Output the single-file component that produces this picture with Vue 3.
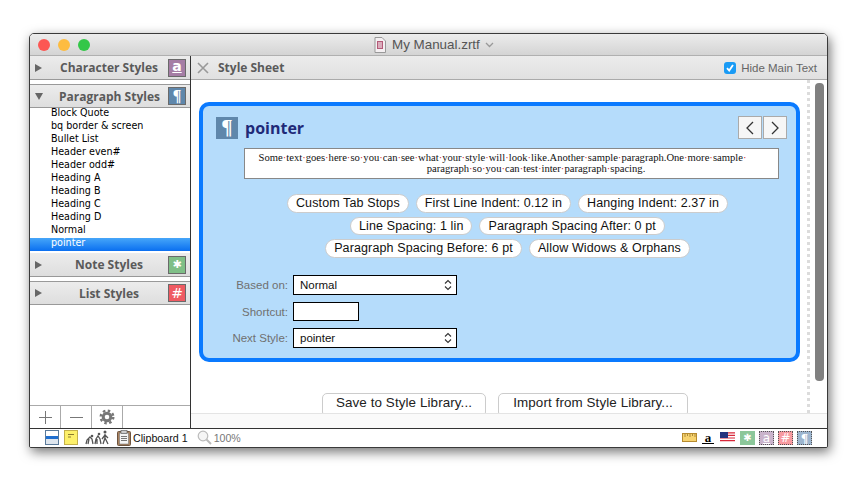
<script setup>
const paragraphStyles = ['Block Quote', 'bq border & screen', 'Bullet List', 'Header even#', 'Header odd#', 'Heading A', 'Heading B', 'Heading C', 'Heading D', 'Normal', 'pointer']
const chipRows = [
  ['Custom Tab Stops', 'First Line Indent: 0.12 in', 'Hanging Indent: 2.37 in'],
  ['Line Spacing: 1 lin', 'Paragraph Spacing After: 0 pt'],
  ['Paragraph Spacing Before: 6 pt', 'Allow Widows & Orphans']
]
const previewLines = [
  'Some text goes here so you can see what your style will look like.Another sample paragraph.One more sample '.split(' '),
  'paragraph so you can test inter paragraph spacing.'.split(' ')
]
</script>

<template>
  <div class="page">
    <div class="window">
      <header class="titlebar">
        <div class="lights"><i class="red"></i><i class="yellow"></i><i class="green"></i></div>
        <div class="title">
          <svg width="14" height="16" viewBox="0 0 14 16"><path d="M2 .5h7l3.500 3.500v11.500h-10.500z" fill="#f4f0f2" stroke="#999"/><rect x="4" y="4" width="6" height="8" fill="#b45a78"/><path d="M5 6h4M5 8h4M5 10h4" stroke="#fff"/></svg>
          <span>My Manual.zrtf</span>
          <svg width="9" height="6" viewBox="0 0 9 6"><path d="M1 1l3.500 3.500L8 1" fill="none" stroke="#999" stroke-width="1.300"/></svg>
        </div>
      </header>

      <div class="body">
        <aside class="sidebar">
          <div class="group-head">
            <i class="tri"></i><span class="group-label">Character Styles</span>
            <span class="style-icon purple">a</span>
          </div>
          <div class="group-head spaced">
            <i class="tri open"></i><span class="group-label">Paragraph Styles</span>
            <span class="style-icon blue">¶</span>
          </div>
          <ul class="style-list">
            <li v-for="name in paragraphStyles" :key="name" :class="{ selected: name === 'pointer' }">{{ name }}</li>
          </ul>
          <div class="group-head">
            <i class="tri"></i><span class="group-label">Note Styles</span>
            <span class="style-icon green">✱</span>
          </div>
          <div class="group-head spaced">
            <i class="tri"></i><span class="group-label">List Styles</span>
            <span class="style-icon redbg">#</span>
          </div>
          <div class="side-fill"></div>
          <div class="side-tools">
            <button><svg width="15" height="15" viewBox="0 0 15 15"><path d="M7.500 1v13M1 7.500h13" stroke="#777"/></svg></button>
            <button><svg width="15" height="15" viewBox="0 0 15 15"><path d="M1 7.500h13" stroke="#777"/></svg></button>
            <button>
              <svg width="16" height="16" viewBox="0 0 16 16"><circle cx="8" cy="8" r="3.800" fill="none" stroke="#777" stroke-width="3"/><circle cx="8" cy="8" r="6.300" fill="none" stroke="#777" stroke-width="2.400" stroke-dasharray="2.500 2.450"/></svg>
            </button>
            <span class="tool-end"></span>
          </div>
        </aside>

        <main class="main">
          <div class="sheet-head">
            <svg class="close" width="12" height="12" viewBox="0 0 12 12"><path d="M1 1l10 10M11 1L1 11" stroke="#999" stroke-width="1.600"/></svg>
            <span class="sheet-title">Style Sheet</span>
            <label class="hide-main">
              <span class="check"><svg width="10" height="10" viewBox="0 0 10 10"><path d="M2 5.200l2.200 2.400L8 2" fill="none" stroke="#fff" stroke-width="1.800"/></svg></span>
              Hide Main Text
            </label>
          </div>

          <div class="sheet-wrap">
            <div class="sheet-content">
              <section class="panel">
                <div class="panel-head">
                  <span class="panel-icon">¶</span>
                  <span class="panel-name">pointer</span>
                  <div class="nav">
                    <button><svg width="10" height="14" viewBox="0 0 10 14"><path d="M8 1L2 7l6 6" fill="none" stroke="#333" stroke-width="1.300"/></svg></button>
                    <button><svg width="10" height="14" viewBox="0 0 10 14"><path d="M2 1l6 6-6 6" fill="none" stroke="#333" stroke-width="1.300"/></svg></button>
                  </div>
                </div>

                <div class="preview">
                  <div v-for="(words, i) in previewLines" :key="i" :class="i === 0 ? 'first-line' : 'hang-line'">
                    <template v-for="(w, j) in words" :key="j">{{ w }}<span v-if="j < words.length - 1" class="dot">·</span></template>
                  </div>
                </div>

                <div class="chips">
                  <div v-for="(row, i) in chipRows" :key="i" class="chip-row">
                    <span v-for="chip in row" :key="chip" class="chip">{{ chip }}</span>
                  </div>
                </div>

                <div class="form">
                  <label>Based on:</label>
                  <div class="select">Normal<svg width="8" height="12" viewBox="0 0 8 12"><path d="M1 4.500l3-3 3 3M1 7.500l3 3 3-3" fill="none" stroke="#333" stroke-width="1.100"/></svg></div>
                  <label>Shortcut:</label>
                  <div class="shortcut"></div>
                  <label>Next Style:</label>
                  <div class="select">pointer<svg width="8" height="12" viewBox="0 0 8 12"><path d="M1 4.500l3-3 3 3M1 7.500l3 3 3-3" fill="none" stroke="#333" stroke-width="1.100"/></svg></div>
                </div>
              </section>

              <div class="library">
                <button class="save">Save to Style Library...</button>
                <button class="import">Import from Style Library...</button>
              </div>
            </div>
            <div class="scroll-track"><div class="thumb"></div></div>
          </div>
          <div class="sheet-foot"></div>
        </main>
      </div>

      <footer class="status">
        <svg class="split" width="14" height="15" viewBox="0 0 14 15"><rect x=".5" y=".5" width="13" height="14" fill="#fff" stroke="#5a7a9a"/><rect x="1" y="6" width="12" height="3" fill="#1f6fd0"/><rect x="1" y="9" width="12" height="5" fill="#dfe6ee"/></svg>
        <svg class="note" width="14" height="15" viewBox="0 0 14 15"><rect x=".5" y=".5" width="13" height="14" fill="#fdf06a" stroke="#c4b04a"/><path d="M4 4.500h6M4 7h3" stroke="#8a7a30"/></svg>
        <svg class="evo" width="24" height="15" viewBox="0 0 24 15"><g fill="none" stroke="#555" stroke-width="1.300"><path d="M1 14l1-4 3-3 2 2 1 5M4 9l-1 5"/><path d="M10 14l1-5 2-3 2 3 1 5M12 9v5"/><path d="M18 14l2-6 3 6M20 8V4M17 9l3-4 3 3"/></g><circle cx="7" cy="6" r="1.300" fill="#555"/><circle cx="14" cy="4" r="1.300" fill="#555"/><circle cx="20" cy="2" r="1.500" fill="#555"/></svg>
        <svg class="clip" width="14" height="16" viewBox="0 0 14 16"><rect x=".5" y="1.500" width="13" height="14" rx="1" fill="#a9825f" stroke="#6d5440"/><rect x="2.500" y="3" width="9" height="11" fill="#f4f4f4" stroke="#666" stroke-width=".5"/><rect x="4" y=".5" width="6" height="3" fill="#ccc" stroke="#666" stroke-width=".7"/><path d="M4 6.500h6M4 8.500h6M4 10.500h6" stroke="#777"/></svg>
        <span class="clip-text">Clipboard 1</span>
        <svg class="zoom" width="15" height="15" viewBox="0 0 15 15"><circle cx="6" cy="6" r="4.800" fill="#f5f5f5" stroke="#bbb" stroke-width="1.200"/><path d="M9.500 9.500L14 14" stroke="#bbb" stroke-width="2"/></svg>
        <span class="zoom-text">100%</span>
        <span class="status-gap"></span>
        <svg width="15" height="9" viewBox="0 0 15 9"><rect x=".5" y=".5" width="14" height="8" fill="#f7d36f" stroke="#b78b2e"/><path d="M3 1v3M5.500 1v2M8 1v3M10.500 1v2M13 1v3" stroke="#8a6a22" stroke-width=".7"/></svg>
        <span class="font-a">a</span>
        <svg width="15" height="11" viewBox="0 0 15 11"><rect width="15" height="11" fill="#fff"/><path d="M0 .8h15M0 3.400h15M0 6h15M0 8.600h15" stroke="#d8283a" stroke-width="1.200"/><rect width="8" height="6" fill="#23337f"/></svg>
        <span class="mini solid-green">✱</span>
        <span class="mini dotted mini-purple">a</span>
        <span class="mini dotted mini-red">#</span>
        <span class="mini dotted mini-blue">¶</span>
      </footer>
    </div>
  </div>
</template>

<style>
html, body { background: #fff; }
</style>

<style scoped>
.page {
  width: 857px;
  height: 480px;
  padding: 33px 0 0 29px;
  box-sizing: border-box;
  font-family: "Liberation Sans", sans-serif;
  overflow: hidden;
}
.window {
  width: 799px;
  height: 415px;
  box-sizing: border-box;
  border: 1px solid #3a3a3a;
  border-radius: 5px 5px 2px 2px;
  box-shadow: 2px 4px 12px rgba(0, 0, 0, 0.55);
  background: #fff;
  display: flex;
  flex-direction: column;
  overflow: hidden;
}
.titlebar {
  height: 21px;
  flex: none;
  background: linear-gradient(#ececec, #d4d4d4);
  border-bottom: 1px solid #b0b0b0;
  display: flex;
  align-items: center;
}
.lights { display: flex; gap: 8px; margin-left: 8px; width: 52px; }
.lights i { width: 12px; height: 12px; border-radius: 50%; }
.lights .red { background: #fc5753; }
.lights .yellow { background: #fdbc40; }
.lights .green { background: #33c748; }
.title {
  display: flex;
  align-items: center;
  gap: 5px;
  margin-left: 283px;
  font-size: 13.4px;
  color: #555;
}
.body { flex: 1; display: flex; min-height: 0; }

.sidebar {
  width: 161px;
  flex: none;
  box-sizing: border-box;
  border-right: 1px solid #333;
  display: flex;
  flex-direction: column;
}
.group-head {
  height: 24px;
  box-sizing: border-box;
  flex: none;
  display: flex;
  align-items: center;
  padding: 0 4px 0 5px;
  background: linear-gradient(#ececec, #dedede);
  border-bottom: 1px solid #999;
}
.group-head.spaced { margin-top: 4px; border-top: 1px solid #999; }
.tri {
  width: 0;
  height: 0;
  border-left: 7px solid #666;
  border-top: 4px solid transparent;
  border-bottom: 4px solid transparent;
  margin-right: 8px;
}
.tri.open {
  border-top: 7px solid #666;
  border-left: 4px solid transparent;
  border-right: 4px solid transparent;
  border-bottom: 0;
}
.group-label {
  flex: 1;
  padding-left: 2px;
  text-align: center;
  font: 700 12px "Open Sans", sans-serif;
  color: #5a5a5a;
}
.style-icon {
  width: 18px;
  height: 18px;
  box-sizing: border-box;
  border: 1px solid #6a6a6a;
  color: #fff;
  font: bold 16px/15px "Liberation Serif", serif;
  text-align: center;
  overflow: hidden;
  margin-left: 2px;
}
.style-icon.purple {
  background: #a57da5;
  font: bold 14px/13px "DejaVu Sans", sans-serif;
  text-decoration: underline;
  text-underline-offset: 1px;
}
.style-icon.blue { background: #5f87ab; }
.style-icon.green { background: #7fbf87; font: 11px/16px "DejaVu Sans", sans-serif; }
.style-icon.redbg { background: #ef5a62; font: 14px/16px "DejaVu Sans", sans-serif; }
.style-list { list-style: none; margin: 0 0 2px; padding: 0; }
.style-list li {
  height: 13px;
  padding-left: 21px;
  font: 9.6px/10px "DejaVu Sans", sans-serif;
  color: #000;
}
.style-list li.selected { background: linear-gradient(#46a6f9, #0a6ff0); color: #fff; }
.side-fill { flex: 1; }
.side-tools {
  height: 23px;
  flex: none;
  box-sizing: border-box;
  border-top: 1px solid #aaa;
  display: flex;
}
.side-tools button {
  width: 31px;
  padding: 0;
  background: #fff;
  border: 0;
  border-right: 1px solid #aaa;
  display: flex;
  align-items: center;
  justify-content: center;
}
.tool-end { flex: 1; }

.main { flex: 1; min-width: 0; display: flex; flex-direction: column; }
.sheet-head {
  height: 24px;
  flex: none;
  box-sizing: border-box;
  background: linear-gradient(#ececec, #e0e0e0);
  border-bottom: 1px solid #aaa;
  display: flex;
  align-items: center;
  padding: 0 10px 0 6px;
}
.sheet-title {
  margin-left: 9px;
  font: 700 12px "Open Sans", sans-serif;
  color: #5a5a5a;
  flex: 1;
}
.hide-main {
  display: flex;
  align-items: center;
  gap: 5px;
  font-size: 11.5px;
  color: #666;
}
.check {
  width: 12px;
  height: 12px;
  border-radius: 3px;
  background: #1a9bf5;
  display: flex;
  align-items: center;
  justify-content: center;
}
.sheet-wrap { flex: 1; min-height: 0; display: flex; border-bottom: 1px solid #e4e4e4; }
.sheet-content { width: 616px; flex: none; overflow: hidden; }
.scroll-track {
  flex: 1;
  border-left: 3px dotted #dcdcdc;
  padding: 3px 0 0 5px;
}
.thumb { width: 9px; height: 298px; border-radius: 4px; background: #808080; }
.sheet-foot { height: 14px; flex: none; background: #fafafa; }

.panel {
  width: 601px;
  box-sizing: border-box;
  margin: 22px 0 0 8px;
  border: 4px solid #0a7aff;
  border-radius: 10px;
  background: #b5dcfb;
  padding: 10px 0 10px;
}
.panel-head { display: flex; align-items: center; height: 23px; padding: 0 9px 0 13px; }
.panel-icon {
  width: 22px;
  height: 22px;
  background: #5f87ab;
  color: #fff;
  font: bold 21px/21px "Liberation Serif", serif;
  text-align: center;
}
.panel-name {
  flex: 1;
  margin-left: 7px;
  font: bold 16px "Open Sans", sans-serif;
  color: #1f2a78;
}
.nav { display: flex; gap: 1px; }
.nav button {
  width: 24px;
  height: 23px;
  padding: 0;
  background: #f6f6f6;
  border: 1px solid #aaa;
  display: flex;
  align-items: center;
  justify-content: center;
}
.preview {
  width: 535px;
  height: 31px;
  box-sizing: border-box;
  margin: 9px 0 0 41px;
  background: #fff;
  border: 1px solid #888;
  padding-top: 3px;
  text-align: center;
  font: 10.6px/11px "Liberation Serif", serif;
  color: #111;
}
.first-line { padding-right: 18px; }
.hang-line { padding-left: 49px; }
.dot { color: #d02030; }
.chips { margin-top: 15px; padding-left: 16px; display: flex; flex-direction: column; gap: 4px; }
.chip-row { display: flex; justify-content: center; gap: 7px; }
.chip {
  height: 18.5px;
  box-sizing: border-box;
  padding: 0 8px;
  border: 1px solid #ccc;
  border-radius: 10px;
  background: #fff;
  font-size: 12.5px;
  letter-spacing: 0.12px;
  line-height: 16.5px;
  color: #111;
}
.form {
  margin-top: 17.5px;
  display: grid;
  grid-template-columns: 85px 164px;
  column-gap: 5px;
  row-gap: 7px;
  align-items: center;
}
.form label { text-align: right; font-size: 11.5px; color: #707070; }
.select {
  height: 20px;
  box-sizing: border-box;
  border: 1px solid #000;
  background: #fff;
  padding: 0 4px 0 6px;
  font-size: 11.5px;
  color: #111;
  display: flex;
  align-items: center;
  justify-content: space-between;
}
.shortcut { width: 66px; height: 19px; box-sizing: border-box; border: 1px solid #000; background: #fff; }
.library { display: flex; gap: 12px; margin-top: 31px; padding-left: 131px; }
.library button {
  height: 24px;
  padding: 0 0 5px;
  background: #fff;
  border: 1px solid #ccc;
  border-radius: 5px;
  font: 13.4px "Liberation Sans", sans-serif;
  letter-spacing: 0.1px;
  color: #222;
}
.save { width: 164px; }
.import { width: 190px; }

.status {
  height: 19px;
  flex: none;
  box-sizing: border-box;
  border-top: 1px solid #333;
  display: flex;
  align-items: center;
  padding: 0 15px 1px 15px;
  background: #fff;
}
.note { margin-left: 5px; }
.evo { margin-left: 7px; }
.clip { margin-left: 8px; }
.clip-text { margin-left: 2px; font-size: 10.7px; color: #111; }
.zoom { margin-left: 9px; }
.zoom-text { margin-left: 2px; font-size: 10.6px; color: #777; }
.status-gap { flex: 1; }
.font-a {
  width: 12px;
  margin: 0 6px 0 5px;
  text-align: center;
  font: bold 13px/11px "Liberation Serif", serif;
  color: #000;
  border-bottom: 1px solid #000;
}
.mini {
  width: 15px;
  height: 14px;
  box-sizing: border-box;
  margin-left: 4px;
  color: #fff;
  text-align: center;
  font: 12px/12px "DejaVu Sans", sans-serif;
  overflow: hidden;
}
.mini.dotted { border: 1px dotted #555; }
.solid-green { background: #8cc79a; margin-left: 5px; font: 10px/14px "DejaVu Sans", sans-serif; }
.mini-purple { background: #c9b3cb; text-decoration: underline; }
.mini-red { background: #f79aa0; }
.mini-blue { background: #9db5ce; font: bold 13px/12px "Liberation Serif", serif; }
</style>
